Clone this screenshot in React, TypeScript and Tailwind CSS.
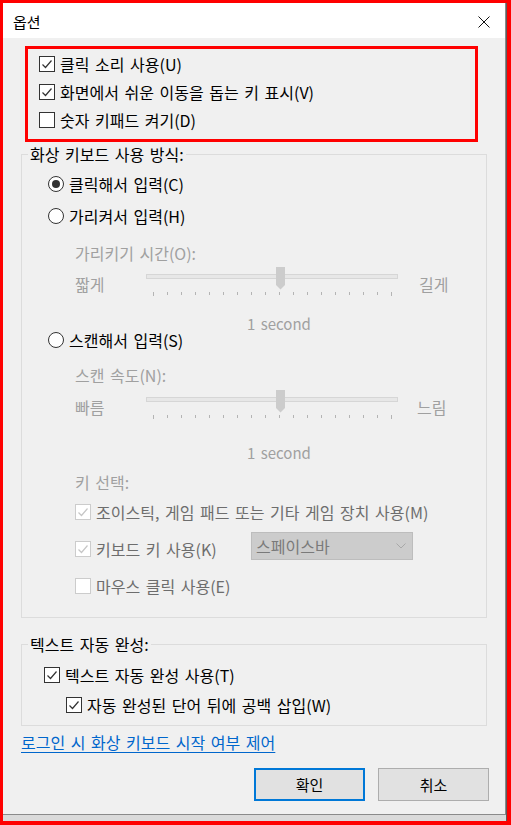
import type { ReactNode } from "react";

const FONT = "font-['Noto_Sans_CJK_KR','Noto_Sans',sans-serif]";

function CheckBox({ checked, disabled }: { checked: boolean; disabled?: boolean }) {
    const stroke = disabled ? "#c6c6c6" : "#333333";
    return (
        <span
            className={`flex h-4 w-4 shrink-0 items-center justify-center border bg-white ${
                disabled ? "border-[#cccccc]" : "border-[#333333]"
            }`}
        >
            {checked && (
                <svg width="14" height="14" viewBox="0 0 14 14">
                    <path d="M2.5 7.5 L5.5 10.5 L11.5 3.5" fill="none" stroke={stroke} strokeWidth="1.2" />
                </svg>
            )}
        </span>
    );
}

function Radio({ selected }: { selected: boolean }) {
    return (
        <span className="flex h-4 w-4 shrink-0 items-center justify-center rounded-full border border-[#333333] bg-white">
            {selected && <span className="h-2 w-2 rounded-full bg-[#333333]" />}
        </span>
    );
}

function CheckRow({
    checked,
    disabled,
    className,
    children,
}: {
    checked: boolean;
    disabled?: boolean;
    className: string;
    children: ReactNode;
}) {
    return (
        <div className={`flex items-center ${className}`}>
            <CheckBox checked={checked} disabled={disabled} />
            <span className={`ml-[5px] ${disabled ? "text-[#6d6d6d]" : "text-black"}`}>{children}</span>
        </div>
    );
}

function RadioRow({ selected, className, children }: { selected: boolean; className: string; children: ReactNode }) {
    return (
        <div className={`ml-[26px] flex items-center ${className}`}>
            <Radio selected={selected} />
            <span className="ml-[5px]">{children}</span>
        </div>
    );
}

// trackbar: 18 ticks, thumb in the middle
function Slider({ left, right, rightGap }: { left: string; right: string; rightGap: string }) {
    const ticks = Array.from({ length: 18 }, (_, i) => 7.5 + i * 14);
    return (
        <div className="ml-[53px] flex h-[36px] items-center text-[#a0a0a0]">
            <span className="w-[71px]">{left}</span>
            <svg width="252" height="36" viewBox="0 0 252 36" className="shrink-0">
                <rect x="0.5" y="8.5" width="251" height="4" fill="#e7e7e7" stroke="#d6d6d6" />
                <path d="M130 1 H139 V19 L134.5 23.5 L130 19 Z" fill="#cccccc" />
                {ticks.map((x, i) => (
                    <line
                        key={i}
                        x1={x}
                        x2={x}
                        y1={26}
                        y2={i === 0 || i === 17 ? 30 : 29}
                        stroke="#b4b4b4"
                        strokeWidth="1"
                    />
                ))}
            </svg>
            <span className={rightGap}>{right}</span>
        </div>
    );
}

function GroupBox({ label, className, children }: { label: string; className: string; children: ReactNode }) {
    return (
        <div className={`relative border border-[#dcdcdc] ${className}`}>
            <span className="absolute -top-[11px] left-[6px] bg-[#f0f0f0] px-[2px] leading-[20px] text-black">
                {label}
            </span>
            {children}
        </div>
    );
}

export default function App() {
    return (
        <div className={`flex h-[825px] w-[511px] flex-col bg-[#ff0000] pb-[4px] pl-[3px] pr-[4px] pt-[3px] ${FONT}`}>
            <div className="flex flex-1 flex-col border-r border-[#5c5c5c] bg-[#dadada]">
                <div className="flex h-[812px] flex-col border-b border-r border-[#8a8a8a] bg-[#f0f0f0] text-[16px] leading-[20px] text-black [word-spacing:2px]">
                    {/* Title bar */}
                    <div className="flex h-[35px] items-center bg-white">
                        <span className="pl-[10px] pt-[2px] text-[15px]">옵션</span>
                        <span className="ml-auto flex w-[42px] justify-center pt-[2px]">
                            <svg width="12" height="12" viewBox="0 0 12 12">
                                <path d="M0.5 0.5 L11.5 11.5 M11.5 0.5 L0.5 11.5" stroke="#111" strokeWidth="1" />
                            </svg>
                        </span>
                    </div>

                    <div className="flex flex-1 flex-col">
                        {/* Highlighted options */}
                        <div className="ml-[22px] mt-[8px] h-[96px] w-[453px] border-[3px] border-[#ff0000] pl-[11px] pt-[1px]">
                            <CheckRow checked className="h-[28px]">클릭 소리 사용(U)</CheckRow>
                            <CheckRow checked className="h-[28px]">화면에서 쉬운 이동을 돕는 키 표시(V)</CheckRow>
                            <CheckRow checked={false} className="h-[28px]">숫자 키패드 켜기(D)</CheckRow>
                        </div>

                        {/* Input mode */}
                        <GroupBox label="화상 키보드 사용 방식:" className="mx-[18px] mt-[12px] h-[464px] pt-[13px]">
                            <RadioRow selected className="h-[32px]">클릭해서 입력(C)</RadioRow>
                            <RadioRow selected={false} className="h-[32px]">가리켜서 입력(H)</RadioRow>
                            <div className="ml-[53px] mt-[9px] flex h-[24px] items-center text-[#a0a0a0]">
                                가리키기 시간(O):
                            </div>
                            <div className="mt-[1px]">
                                <Slider left="짧게" right="길게" rightGap="ml-[21px]" />
                            </div>
                            <div className="ml-[225px] mt-[14px] flex h-[16px] items-center text-[15px] text-[#a0a0a0]">
                                1 second
                            </div>
                            <RadioRow selected={false} className="h-[16px]">스캔해서 입력(S)</RadioRow>
                            <div className="ml-[53px] mt-[15px] flex h-[24px] items-center text-[#a0a0a0]">
                                스캔 속도(N):
                            </div>
                            <div className="mt-[2px]">
                                <Slider left="빠름" right="느림" rightGap="ml-[19px]" />
                            </div>
                            <div className="ml-[225px] mt-[20px] flex h-[16px] items-center text-[15px] text-[#a0a0a0]">
                                1 second
                            </div>
                            <div className="ml-[53px] mt-[9px] flex h-[24px] items-center text-[#a0a0a0]">
                                키 선택:
                            </div>
                            <CheckRow checked disabled className="ml-[53px] h-[36px]">
                                조이스틱, 게임 패드 또는 기타 게임 장치 사용(M)
                            </CheckRow>
                            <div className="ml-[53px] flex h-[38px] items-center">
                                <CheckBox checked disabled />
                                <span className="ml-[5px] w-[155px] text-[#6d6d6d]">키보드 키 사용(K)</span>
                                <div className="mb-[6px] flex h-[28px] w-[162px] items-center border border-[#bdbdbd] bg-[#cccccc] pl-[4px] pr-[6px] text-[#7a7a7a]">
                                    <span>스페이스바</span>
                                    <svg width="10" height="6" viewBox="0 0 10 6" className="ml-auto">
                                        <path d="M0.5 0.5 L5 5 L9.5 0.5" fill="none" stroke="#a8a8a8" strokeWidth="1" />
                                    </svg>
                                </div>
                            </div>
                            <CheckRow checked={false} disabled className="ml-[53px] h-[36px]">
                                마우스 클릭 사용(E)
                            </CheckRow>
                        </GroupBox>

                        {/* Text prediction */}
                        <GroupBox label="텍스트 자동 완성:" className="mx-[18px] mt-[26px] h-[82px] pt-[15px]">
                            <CheckRow checked className="ml-[22px] h-[30px]">
                                텍스트 자동 완성 사용(T)
                            </CheckRow>
                            <CheckRow checked className="ml-[44px] h-[30px]">
                                자동 완성된 단어 뒤에 공백 삽입(W)
                            </CheckRow>
                        </GroupBox>

                        <div className="ml-[18px] mt-[6px] flex h-[20px] items-center">
                            <a href="#" className="text-[#0066cc] underline underline-offset-[3px]">
                                로그인 시 화상 키보드 시작 여부 제어
                            </a>
                        </div>

                        <div className="mt-[16px] flex justify-end gap-[13px] pr-[16px] text-[15px]">
                            <button
                                type="button"
                                className="h-[33px] w-[111px] border-2 border-[#0078d7] bg-[#e1e1e1] text-black"
                            >
                                확인
                            </button>
                            <button
                                type="button"
                                className="h-[33px] w-[111px] border border-[#adadad] bg-[#e1e1e1] text-black"
                            >
                                취소
                            </button>
                        </div>
                    </div>
                </div>
            </div>
        </div>
    );
}
